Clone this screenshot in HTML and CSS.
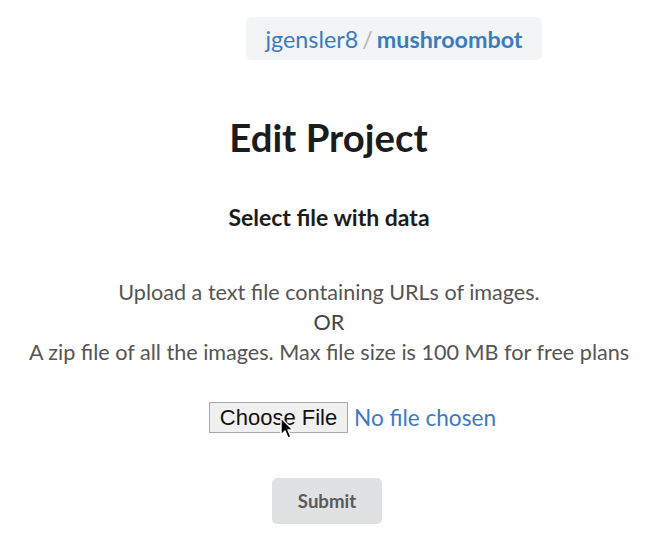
FILE: index.html
```html
<!DOCTYPE html>
<html>
<head>
<meta charset="utf-8">
<link rel="stylesheet" href="styles.css">
</head>
<body>
<div class="page">
  <div class="crumb-row">
    <div class="crumb"><a class="user">jgensler8</a><span class="sep">/</span><a class="repo">mushroombot</a></div>
  </div>
  <h1 class="title">Edit Project</h1>
  <h2 class="subtitle">Select file with data</h2>
  <div class="desc">
    <div>Upload a text file containing URLs of images.</div>
    <div class="or">OR</div>
    <div>A zip file of all the images. Max file size is 100 MB for free plans</div>
  </div>
  <div class="file-row">
    <span class="choose">Choose File
      <svg class="cursor" width="16" height="24" viewBox="0 0 16 24"><path d="M1 1 L1 18 L5 14 L8 21 L11 20 L8 13 L13 13 Z" fill="#000" stroke="#fff" stroke-width="1.4" stroke-linejoin="round"/></svg>
    </span>
    <span class="nofile">No file chosen</span>
  </div>
  <div class="submit-row">
    <button class="submit">Submit</button>
  </div>
</div>
</body>
</html>
```
FILE: styles.css
```css
html, body {
  margin: 0;
  padding: 0;
  background: #fff;
}
body {
  font-family: Lato, "Open Sans", sans-serif;
  color: #222;
}
.page {
  width: 665px;
  display: flex;
  flex-direction: column;
  align-items: stretch;
}
.crumb-row {
  display: flex;
  justify-content: flex-start;
  padding: 17px 0 0 246px;
}
.crumb {
  width: 296px;
  height: 43px;
  box-sizing: border-box;
  background: #f3f4f5;
  border-radius: 6px;
  display: flex;
  align-items: center;
  justify-content: center;
  font-size: 23.3px;
  color: #4183c4;
}
.user { color: #3b7bbf; }
.sep { color: #b4b4b4; margin: 0 4px; }
.repo { color: #3b7bbf; font-weight: 700; }
.title {
  margin: 52px 0 0 0;
  text-align: center;
  font-size: 38.3px;
  font-weight: 700;
  line-height: 50px;
  color: #1b1c1d;
  padding-right: 8px;
}
.subtitle {
  margin: 41px 0 0 0;
  text-align: center;
  font-size: 23px;
  font-weight: 700;
  line-height: 28px;
  color: #1b1c1d;
  padding-right: 7px;
}
.desc {
  margin-top: 46px;
  text-align: center;
  font-size: 21.6px;
  line-height: 30px;
  color: #555;
  padding-right: 7px;
}
.or { color: #444; }
.file-row {
  margin-top: 35px;
  display: flex;
  align-items: center;
  padding-left: 209px;
  gap: 6px;
}
.choose {
  position: relative;
  box-sizing: border-box;
  width: 139px;
  height: 31px;
  border: 1px solid #a9a9a9;
  background: #f0f0f0;
  font-family: "Liberation Sans", Arial, sans-serif;
  font-size: 22px;
  color: #111;
  display: flex;
  align-items: center;
  justify-content: center;
}
.cursor {
  position: absolute;
  left: 70px;
  top: 14px;
}
.nofile {
  font-size: 22.6px;
  color: #3b7bbf;
}
.submit-row {
  margin-top: 45px;
  display: flex;
  padding-left: 272px;
}
.submit {
  width: 110px;
  height: 46px;
  border: none;
  border-radius: 5px;
  background: #e0e1e2;
  font-family: Lato, sans-serif;
  font-weight: 700;
  font-size: 18.6px;
  color: #5a5a5a;
}
```
